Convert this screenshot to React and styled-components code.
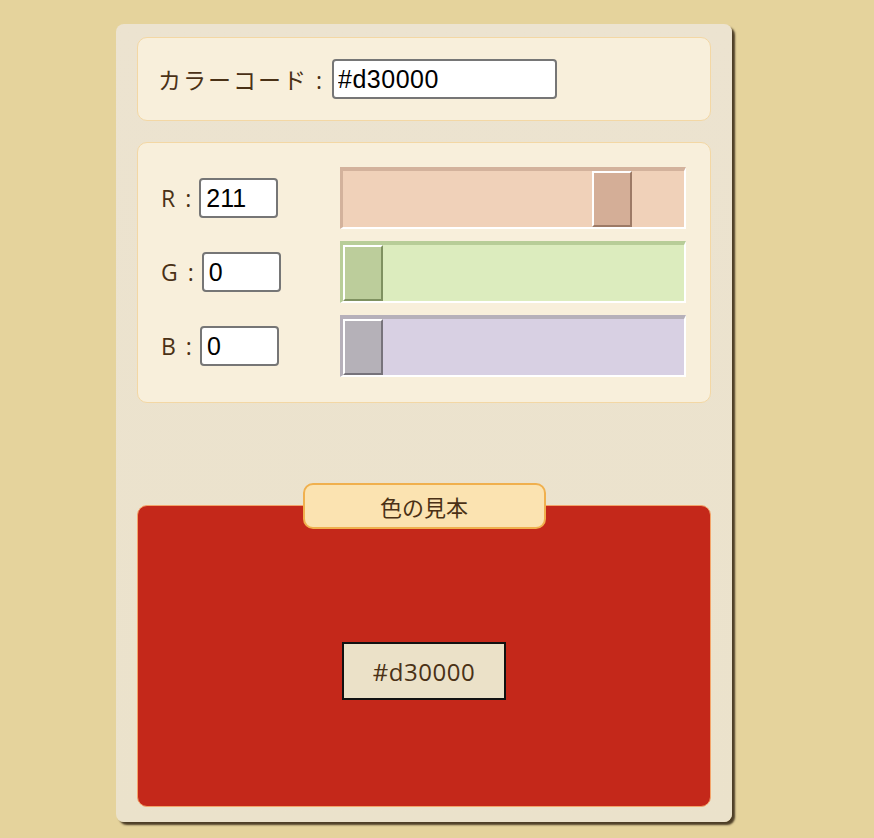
import React, { useState } from 'react'
import styled, { createGlobalStyle } from 'styled-components'

const GlobalStyle = createGlobalStyle`
  html, body {
    margin: 0;
    padding: 0;
  }
  body {
    background: #e5d39c;
    font-family: 'Open Sans', 'Noto Sans CJK JP', sans-serif;
    min-height: 838px;
  }
`

const toHex = (n) => n.toString(16).padStart(2, '0')

const tracks = {
  r: { bg: '#f0d1b9', dark: '#d3b29c', thumb: '#d4ae97', thumbDark: '#9d7a66' },
  g: { bg: '#dcecbe', dark: '#b8cd98', thumb: '#bccd9b', thumbDark: '#7f9160' },
  b: { bg: '#d8d0e3', dark: '#b6b0ba', thumb: '#b5b1b8', thumbDark: '#77737b' },
}

function App() {
  const [rgb, setRgb] = useState({ r: 211, g: 0, b: 0 })
  const code = `#${toHex(rgb.r)}${toHex(rgb.g)}${toHex(rgb.b)}`

  const update = (key, value) => {
    const n = Math.max(0, Math.min(255, parseInt(value, 10) || 0))
    setRgb({ ...rgb, [key]: n })
  }

  return (
    <>
      <GlobalStyle />
      <Page>
        <Card>
          <Panel>
            <CodeRow>
              <Label spacing="2px">カラーコード :</Label>
              <CodeInput value={code} readOnly />
            </CodeRow>
          </Panel>

          <SliderPanel>
            {['r', 'g', 'b'].map((key) => (
              <SliderRow key={key}>
                <ValueCell>
                  <Label spacing="2px">{key.toUpperCase()} :</Label>
                  <NumInput
                    value={rgb[key]}
                    onChange={(e) => update(key, e.target.value)}
                  />
                </ValueCell>
                <Range
                  type="range"
                  min="0"
                  max="255"
                  value={rgb[key]}
                  tone={tracks[key]}
                  onChange={(e) => update(key, e.target.value)}
                />
              </SliderRow>
            ))}
          </SliderPanel>

          <SampleArea>
            <SampleTitle>色の見本</SampleTitle>
            <SampleBox>
              <SampleCode>{code}</SampleCode>
            </SampleBox>
          </SampleArea>
        </Card>
      </Page>
    </>
  )
}

const Page = styled.div`
  padding: 24px 0 0 116px;
`

const Card = styled.div`
  width: 574px;
  padding: 13px 21px 15px 21px;
  background: linear-gradient(180deg, #ece3d0 0%, #ebe2cb 100%);
  border-radius: 8px;
  box-shadow: 3px 3px 2px rgba(60, 45, 25, 0.9);
  display: flex;
  flex-direction: column;
`

const Panel = styled.div`
  background: #f8efdb;
  border: 1px solid #f3d7a4;
  border-radius: 10px;
  box-sizing: border-box;
`

const CodeRow = styled.div`
  height: 82px;
  display: flex;
  align-items: center;
  padding-left: 20px;
  gap: 8px;
`

const Label = styled.span`
  font-family: 'Open Sans', 'Noto Sans CJK JP', sans-serif;
  font-size: 23px;
  letter-spacing: ${(p) => p.spacing || '1px'};
  color: #4a3116;
  white-space: nowrap;
`

const CodeInput = styled.input`
  width: 225px;
  height: 40px;
  box-sizing: border-box;
  border: 2px solid #767676;
  border-radius: 4px;
  padding: 0 4px;
  font-family: 'Liberation Sans', Arial, sans-serif;
  font-size: 25px;
  letter-spacing: 0.5px;
  color: #000;
  background: #fff;
  outline: none;
`

const SliderPanel = styled(Panel)`
  margin-top: 21px;
  padding: 24px 0 25px 23px;
  display: flex;
  flex-direction: column;
  gap: 12px;
`

const SliderRow = styled.div`
  display: grid;
  grid-template-columns: 179px 346px;
  align-items: center;
`

const ValueCell = styled.div`
  display: flex;
  align-items: center;
  gap: 6px;
`

const NumInput = styled.input`
  width: 79px;
  height: 40px;
  box-sizing: border-box;
  border: 2px solid #767676;
  border-radius: 4px;
  padding: 0 5px;
  font-family: 'Liberation Sans', Arial, sans-serif;
  font-size: 25px;
  color: #000;
  background: #fff;
  outline: none;
`

const Range = styled.input`
  -webkit-appearance: none;
  appearance: none;
  margin: 0;
  width: 346px;
  height: 62px;
  box-sizing: border-box;
  background: ${(p) => p.tone.bg};
  border-style: solid;
  border-width: 4px 2px 2px 3px;
  border-color: ${(p) => p.tone.dark} #fff #fff ${(p) => p.tone.dark};
  outline: none;
  cursor: pointer;

  &::-webkit-slider-thumb {
    -webkit-appearance: none;
    appearance: none;
    width: 40px;
    height: 56px;
    box-sizing: border-box;
    background: ${(p) => p.tone.thumb};
    border-style: solid;
    border-width: 2px;
    border-color: #fff ${(p) => p.tone.thumbDark} ${(p) => p.tone.thumbDark} #fff;
  }
`

const SampleArea = styled.div`
  margin-top: 80px;
  display: flex;
  flex-direction: column;
  align-items: center;
`

const SampleTitle = styled.div`
  position: relative;
  z-index: 1;
  width: 243px;
  height: 46px;
  box-sizing: border-box;
  margin-bottom: -24px;
  background: #fbe3b1;
  border: 2px solid #f0b04e;
  border-radius: 10px;
  display: flex;
  align-items: center;
  justify-content: center;
  font-family: 'Open Sans', 'Noto Sans CJK JP', sans-serif;
  font-size: 22px;
  color: #4a3116;
`

const SampleBox = styled.div`
  align-self: stretch;
  height: 302px;
  box-sizing: border-box;
  background: #c4281a;
  border: 1px solid #f4a46a;
  border-radius: 10px;
  display: flex;
  align-items: center;
  justify-content: center;
  padding-top: 30px;
`

const SampleCode = styled.div`
  width: 164px;
  height: 58px;
  box-sizing: border-box;
  border: 2px solid #111;
  background: #ebe1c8;
  display: flex;
  align-items: center;
  justify-content: center;
  font-family: 'Open Sans', 'Noto Sans CJK JP', sans-serif;
  font-size: 24px;
  letter-spacing: 0.5px;
  color: #4a3116;
`

export default App
